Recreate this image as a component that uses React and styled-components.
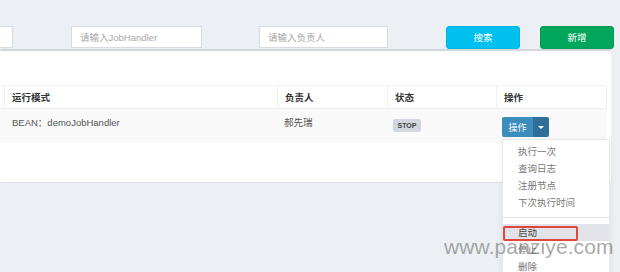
import styled, { createGlobalStyle } from "styled-components";

const GlobalStyle = createGlobalStyle`
    html, body {
        margin: 0;
        padding: 0;
        background: #ecf0f5;
        overflow: hidden;
    }
    body {
        font-family: "Liberation Sans", "Noto Sans CJK SC", sans-serif;
        font-size: 9.5px;
        color: #333;
    }
    * {
        box-sizing: border-box;
    }
`;

const Page = styled.div`
    position: relative;
    width: 620px;
    height: 272px;
    padding-top: 26px;
`;

const Toolbar = styled.div`
    display: flex;
    align-items: center;
    height: 22px;
`;

const SearchInput = styled.input`
    width: ${props => props.width}px;
    height: 22px;
    margin-left: ${props => props.gap}px;
    border: 1px solid #d8dce2;
    background: #ffffff;
    padding: 0 8px;
    font-family: inherit;
    font-size: 9.5px;
    outline: none;

    &::placeholder {
        color: #a9a9a9;
    }
`;

const ToolButton = styled.button`
    width: 74px;
    height: 23px;
    margin-left: ${props => props.gap}px;
    border: 1px solid ${props => props.border};
    border-radius: 3px;
    background: ${props => props.bg};
    color: #ffffff;
    font-family: inherit;
    font-size: 9.5px;
    cursor: pointer;
`;

const Box = styled.div`
    width: 611px;
    margin-top: 1px;
    background: #ffffff;
    border-top: 2px solid #d2d6de;
    border-bottom: 1px solid #d9dde3;
    border-radius: 2px;
    padding: 34px 0 39px;
`;

const Table = styled.div`
    margin-left: -40px;
    width: 647px;
`;

const Row = styled.div`
    display: grid;
    grid-template-columns: 45px 273px 110px 109px 110px;
    height: ${props => props.head ? 24 : 34}px;
    background: ${props => props.striped ? '#f9f9f9' : '#ffffff'};
    border-top: ${props => props.head ? '1px solid #f2f2f2' : 'none'};
    border-bottom: ${props => props.head ? '1px solid #eeeeee' : 'none'};
`;

const HeadCell = styled.div`
    display: flex;
    align-items: center;
    padding-left: 7px;
    font-weight: bold;
    color: #333;
    border-right: 1px solid #f0f0f0;
`;

const Cell = styled.div`
    position: relative;
    padding: ${props => props.pad ?? 7}px 0 0 ${props => props.left ?? 7}px;
    line-height: 14px;
    color: #555;
`;

const Label = styled.span`
    display: inline-block;
    width: 28px;
    height: 13px;
    line-height: 13px;
    text-align: center;
    background: #d2d6de;
    border-radius: 2px;
    color: #444;
    font-size: 7px;
    font-weight: bold;
`;

const BtnGroup = styled.div`
    position: relative;
    display: flex;
    width: 47px;
    height: 20px;
`;

const ActionBtn = styled.button`
    width: 31px;
    height: 20px;
    border: none;
    border-radius: 2px 0 0 2px;
    background: #3c8dbc;
    color: #ffffff;
    font-family: inherit;
    font-size: 9px;
    padding: 0;
`;

const CaretBtn = styled.button`
    width: 16px;
    height: 20px;
    border: none;
    border-radius: 0 2px 2px 0;
    background: #2f6f98;
    display: flex;
    align-items: center;
    justify-content: center;
    padding: 0;

    &::after {
        content: "";
        border-left: 3px solid transparent;
        border-right: 3px solid transparent;
        border-top: 3px solid #ffffff;
    }
`;

const Menu = styled.div`
    position: absolute;
    top: 22px;
    left: 0;
    width: 108px;
    padding: 3px 0;
    background: #ffffff;
    border: 1px solid #e8e8e8;
    border-radius: 2px;
    box-shadow: 0 2px 6px rgba(0, 0, 0, 0.08);
    z-index: 2;
`;

const MenuItem = styled.div`
    position: relative;
    height: 17px;
    line-height: 17px;
    padding-left: 15px;
    color: ${props => props.active ? '#444' : '#777'};
    background: ${props => props.active ? '#e1e3e8' : 'transparent'};
    white-space: nowrap;
`;

const Divider = styled.div`
    height: 1px;
    margin: 6px 0;
    background: #e5e5e5;
`;

const Highlight = styled.span`
    position: absolute;
    left: 0;
    top: 2px;
    width: 75px;
    height: 15px;
    border: 2px solid #e2453c;
    border-radius: 2px;
`;

const Watermark = styled.div`
    position: absolute;
    left: 444px;
    top: 236px;
    font-family: "Liberation Sans", sans-serif;
    font-size: 21px;
    line-height: 21px;
    color: rgba(110, 110, 110, 0.6);
    letter-spacing: 0.1px;
    pointer-events: none;
    z-index: 3;
`;

const menuItems = ['执行一次', '查询日志', '注册节点', '下次执行时间'];

export default function App() {
    return (
        <>
            <GlobalStyle />
            <Page>
                <Toolbar>
                    <SearchInput width={113} gap={-100} placeholder="" />
                    <SearchInput width={131} gap={58} placeholder="请输入JobHandler" />
                    <SearchInput width={129} gap={57} placeholder="请输入负责人" />
                    <ToolButton gap={58} bg="#00c0ef" border="#00b4e0">搜索</ToolButton>
                    <ToolButton gap={20} bg="#00a65a" border="#009a53">新增</ToolButton>
                </Toolbar>
                <Box>
                    <Table>
                        <Row head>
                            <HeadCell />
                            <HeadCell>运行模式</HeadCell>
                            <HeadCell>负责人</HeadCell>
                            <HeadCell>状态</HeadCell>
                            <HeadCell>操作</HeadCell>
                        </Row>
                        <Row striped>
                            <Cell />
                            <Cell>BEAN：demoJobHandler</Cell>
                            <Cell left={6}>郝先瑞</Cell>
                            <Cell left={5} pad={9}><Label>STOP</Label></Cell>
                            <Cell left={5} pad={8}>
                                <BtnGroup>
                                    <ActionBtn>操作</ActionBtn>
                                    <CaretBtn />
                                    <Menu>
                                        {menuItems.map(item => <MenuItem key={item}>{item}</MenuItem>)}
                                        <Divider />
                                        <MenuItem active>启动<Highlight /></MenuItem>
                                        <MenuItem>停止</MenuItem>
                                        <MenuItem>删除</MenuItem>
                                    </Menu>
                                </BtnGroup>
                            </Cell>
                        </Row>
                    </Table>
                </Box>
                <Watermark>www.panziye.com</Watermark>
            </Page>
        </>
    );
}
